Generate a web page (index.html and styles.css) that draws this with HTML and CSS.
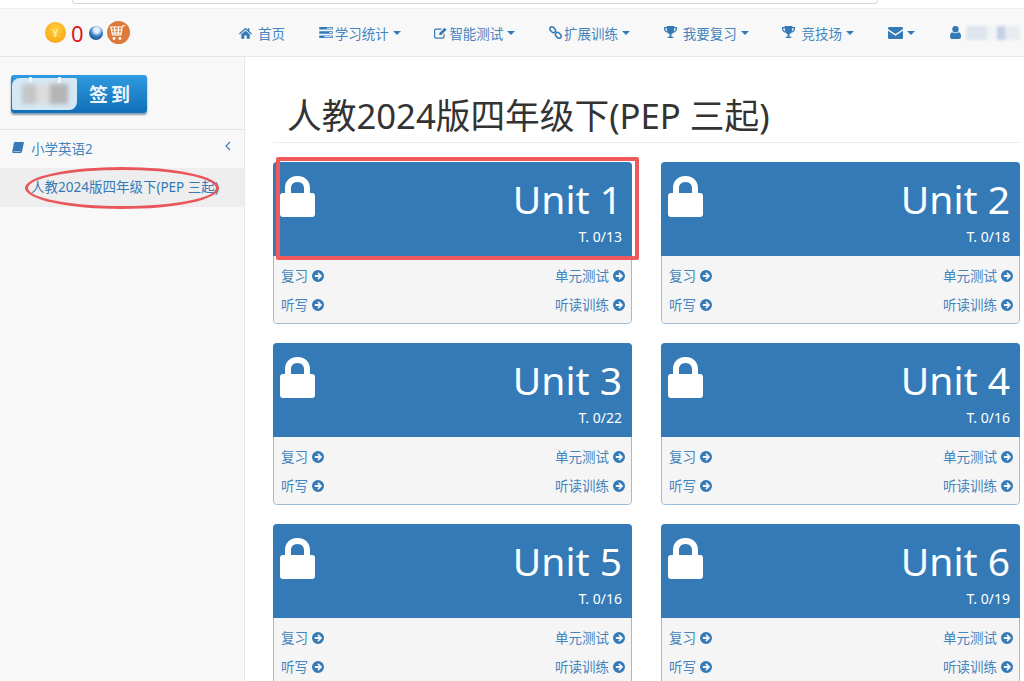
FILE: index.html
```html
<!DOCTYPE html>
<html lang="zh-CN">
<head>
    <meta charset="UTF-8">
    <title>人教2024版四年级下(PEP 三起)</title>
    <link rel="stylesheet" href="styles.css">
</head>
<body>
    <svg class="defs" width="0" height="0">
        <symbol id="i-home" viewBox="0 0 16 14"><path d="M8 0.5 10.8 3V1.2h2V4.800L16 7.700 15 8.800 8 2.700 1 8.800 0 7.700zM2.800 8.600 8 4.200l5.200 4.400V14H9.500V10h-3v4H2.800z"/></symbol>
        <symbol id="i-tasks" viewBox="0 0 16 13"><path d="M0 0h16v3H0zM0 5h16v3H0zM0 10h16v3H0z"/><path fill="#f8f8f8" d="M9 1h6v1H9zM12 6h3v1h-3zM6 11h9v1H6z"/></symbol>
        <symbol id="i-edit" viewBox="0 0 16 14"><path d="M2.500 1.500H10L8.500 3H2.500q-1 0-1 1v7.500q0 1 1 1h8q1 0 1-1V9L13 7.500v4.300q0 2.200-2.300 2.200H2.300Q0 14 0 11.800V3.800Q0 1.500 2.500 1.500z"/><path d="M13 0.500 15.500 3 9 9.500H6.500V7z"/></symbol>
        <symbol id="i-link" viewBox="0 0 14 14"><g fill="none" stroke="currentColor" stroke-width="1.700"><rect x="-3.500" y="-2.300" width="7" height="4.600" rx="2.300" transform="translate(4 4) rotate(45)"/><rect x="-3.500" y="-2.300" width="7" height="4.600" rx="2.300" transform="translate(10 10) rotate(45)"/></g></symbol>
        <symbol id="i-trophy" viewBox="0 0 14 14"><path d="M3 0h8v1h3v2q0 3.500-4 4.300Q9 8.500 8 9v2.500h2V13H4v-1.500h2V9Q5 8.500 4 7.300 0 6.500 0 3V1h3zM1.300 2.300V3q0 2 2.200 2.800Q3 4 3 2.300zM12.700 2.300H11q0 1.700-.5 3.500 2.200-.8 2.200-2.800z"/></symbol>
        <symbol id="i-envelope" viewBox="0 0 15 12"><path d="M1.200 0h12.600Q15 0 15 1.200V2L7.500 7 0 2v-.8Q0 0 1.200 0zM0 3.700 7.500 8.700 15 3.700v7.100Q15 12 13.800 12H1.200Q0 12 0 10.800z"/></symbol>
        <symbol id="i-user" viewBox="0 0 11 13"><circle cx="5.500" cy="3.200" r="3.200"/><path d="M2.200 6.300Q5.500 8.300 8.800 6.300 11 6.800 11 10.500 11 13 9 13H2Q0 13 0 10.500 0 6.800 2.200 6.300z"/></symbol>
        <symbol id="i-book" viewBox="0 0 13 13"><path d="M3.200 0H13L10.800 10.500Q10.500 12 9 12H1.800Q0 12 .3 10L2 1.500Q2.200 0 3.200 0zM1.800 10.300 1.600 10.900H9.300L9.500 10.300z"/></symbol>
        <symbol id="i-lock" viewBox="0 0 35 41"><path fill-rule="evenodd" d="M17.500 0C26 0 30 6 30 12V17H32Q35 17 35 20V38Q35 41 32 41H3Q0 41 0 38V20Q0 17 3 17H5V12C5 6 9 0 17.500 0zM17.500 6C13 6 11 9 11 12V17H24V12C24 9 22 6 17.500 6z"/></symbol>
        <symbol id="i-go" viewBox="0 0 12 12"><path fill-rule="evenodd" d="M6 0a6 6 0 1 1 0 12A6 6 0 0 1 6 0zM6.500 2.300 5.300 3.500 6.900 5H2.800v2h4.100L5.300 8.500l1.200 1.200L10.200 6z"/></symbol>
    </svg>

    <div class="browser-strip"><div class="address-bar"></div></div>

    <nav class="navbar">
        <div class="brand">
            <span class="coin">¥</span>
            <span class="coin-count">0</span>
            <span class="globe"></span>
            <span class="cart">
                <svg width="18" height="16" viewBox="0 0 18 16"><path fill="none" stroke="#fff" stroke-width="1.200" d="M1 2h12l2-2h2M2 2l1.500 8h8.500L13 2M2.500 5h11M3 8h9.500M5.500 2l.7 8M9.500 2l-.3 8"/><circle cx="5" cy="13.500" r="1.400" fill="#fff"/><circle cx="11" cy="13.500" r="1.400" fill="#fff"/></svg>
            </span>
        </div>
        <ul class="nav-links">
            <li><svg class="ico ico-home"><use href="#i-home"/></svg><span>首页</span></li>
            <li><svg class="ico ico-tasks"><use href="#i-tasks"/></svg><span>学习统计</span><i class="caret"></i></li>
            <li><svg class="ico ico-edit"><use href="#i-edit"/></svg><span>智能测试</span><i class="caret"></i></li>
            <li><svg class="ico ico-link"><use href="#i-link"/></svg><span>扩展训练</span><i class="caret"></i></li>
            <li><svg class="ico ico-trophy"><use href="#i-trophy"/></svg><span>我要复习</span><i class="caret"></i></li>
            <li><svg class="ico ico-trophy"><use href="#i-trophy"/></svg><span>竞技场</span><i class="caret"></i></li>
            <li class="nav-mail"><svg class="ico ico-mail"><use href="#i-envelope"/></svg><i class="caret"></i></li>
            <li><svg class="ico ico-user"><use href="#i-user"/></svg><span class="blur-name"></span></li>
        </ul>
    </nav>

    <div class="wrapper">
        <aside class="sidebar">
            <div class="signin-box">
                <div class="signin-btn">
                    <div class="calendar"><span class="blur-date"></span></div>
                    <span class="signin-text">签到</span>
                </div>
            </div>
            <div class="menu-title">
                <svg class="ico ico-book"><use href="#i-book"/></svg>
                <span>小学英语2</span>
                <svg class="menu-arrow" viewBox="0 0 6 10"><path d="M5 1 1 5l4 4" fill="none" stroke="currentColor" stroke-width="1.200"/></svg>
            </div>
            <div class="menu-active">人教2024版四年级下(PEP 三起)</div>
            <div class="circle-mark"></div>
        </aside>

        <main class="content">
            <h1 class="page-title">人教2024版四年级下(PEP 三起)</h1>
            <div class="cards">
                <section class="card">
                    <div class="card-head">
                        <svg class="lock"><use href="#i-lock"/></svg>
                        <div class="card-info"><div class="unit">Unit 1</div><div class="tasks">T. 0/13</div></div>
                    </div>
                    <div class="card-foot">
                        <a>复习<svg class="go"><use href="#i-go"/></svg></a>
                        <a>单元测试<svg class="go"><use href="#i-go"/></svg></a>
                        <a>听写<svg class="go"><use href="#i-go"/></svg></a>
                        <a>听读训练<svg class="go"><use href="#i-go"/></svg></a>
                    </div>
                    <div class="box-mark"></div>
                </section>
                <section class="card">
                    <div class="card-head">
                        <svg class="lock"><use href="#i-lock"/></svg>
                        <div class="card-info"><div class="unit">Unit 2</div><div class="tasks">T. 0/18</div></div>
                    </div>
                    <div class="card-foot">
                        <a>复习<svg class="go"><use href="#i-go"/></svg></a>
                        <a>单元测试<svg class="go"><use href="#i-go"/></svg></a>
                        <a>听写<svg class="go"><use href="#i-go"/></svg></a>
                        <a>听读训练<svg class="go"><use href="#i-go"/></svg></a>
                    </div>
                </section>
                <section class="card">
                    <div class="card-head">
                        <svg class="lock"><use href="#i-lock"/></svg>
                        <div class="card-info"><div class="unit">Unit 3</div><div class="tasks">T. 0/22</div></div>
                    </div>
                    <div class="card-foot">
                        <a>复习<svg class="go"><use href="#i-go"/></svg></a>
                        <a>单元测试<svg class="go"><use href="#i-go"/></svg></a>
                        <a>听写<svg class="go"><use href="#i-go"/></svg></a>
                        <a>听读训练<svg class="go"><use href="#i-go"/></svg></a>
                    </div>
                </section>
                <section class="card">
                    <div class="card-head">
                        <svg class="lock"><use href="#i-lock"/></svg>
                        <div class="card-info"><div class="unit">Unit 4</div><div class="tasks">T. 0/16</div></div>
                    </div>
                    <div class="card-foot">
                        <a>复习<svg class="go"><use href="#i-go"/></svg></a>
                        <a>单元测试<svg class="go"><use href="#i-go"/></svg></a>
                        <a>听写<svg class="go"><use href="#i-go"/></svg></a>
                        <a>听读训练<svg class="go"><use href="#i-go"/></svg></a>
                    </div>
                </section>
                <section class="card">
                    <div class="card-head">
                        <svg class="lock"><use href="#i-lock"/></svg>
                        <div class="card-info"><div class="unit">Unit 5</div><div class="tasks">T. 0/16</div></div>
                    </div>
                    <div class="card-foot">
                        <a>复习<svg class="go"><use href="#i-go"/></svg></a>
                        <a>单元测试<svg class="go"><use href="#i-go"/></svg></a>
                        <a>听写<svg class="go"><use href="#i-go"/></svg></a>
                        <a>听读训练<svg class="go"><use href="#i-go"/></svg></a>
                    </div>
                </section>
                <section class="card">
                    <div class="card-head">
                        <svg class="lock"><use href="#i-lock"/></svg>
                        <div class="card-info"><div class="unit">Unit 6</div><div class="tasks">T. 0/19</div></div>
                    </div>
                    <div class="card-foot">
                        <a>复习<svg class="go"><use href="#i-go"/></svg></a>
                        <a>单元测试<svg class="go"><use href="#i-go"/></svg></a>
                        <a>听写<svg class="go"><use href="#i-go"/></svg></a>
                        <a>听读训练<svg class="go"><use href="#i-go"/></svg></a>
                    </div>
                </section>
            </div>
        </main>
    </div>
</body>
</html>
```

FILE: styles.css
```css
html, body {
    margin: 0;
    padding: 0;
    height: 681px;
    overflow: hidden;
    background-color: #fff;
    color: #4585bd;
    font-family: "Noto Sans", "Noto Sans CJK SC", sans-serif;
    font-size: 13.5px;
}

.defs {
    position: absolute;
}

.ico {
    fill: #337ab7;
    color: #337ab7;
    flex: none;
}

/* top edge of the browser */
.browser-strip {
    height: 8px;
    background-color: #fff;
    overflow: hidden;
    padding-left: 72px;
}

.address-bar {
    width: 806px;
    height: 4px;
    box-sizing: border-box;
    border: 1px solid #d5d5d5;
    border-top: 0;
    border-radius: 0 0 10px 10px;
}

/* navbar */
.navbar {
    display: flex;
    align-items: center;
    height: 47px;
    background-color: #f8f8f8;
    border-top: 1px solid #f0f0f0;
    border-bottom: 1px solid #e7e7e7;
}

.brand {
    display: flex;
    align-items: center;
    width: 239px;
    box-sizing: border-box;
    padding-left: 45px;
}

.coin {
    width: 21px;
    height: 21px;
    border-radius: 50%;
    background: radial-gradient(circle at 50% 35%, #ffd23c, #f79a0c);
    color: #fff3c0;
    font-size: 11px;
    line-height: 21px;
    text-align: center;
}

.coin-count {
    margin-left: 5px;
    color: #d9161c;
    font-size: 22px;
    line-height: 24px;
}

.globe {
    width: 14px;
    height: 14px;
    margin-left: 5px;
    border-radius: 50%;
    background: radial-gradient(circle at 55% 30%, #e4f0fa 0 20%, #2f7cc4 50%, #123a66);
}

.cart {
    display: flex;
    align-items: center;
    justify-content: center;
    width: 23px;
    height: 23px;
    margin-left: 4px;
    border-radius: 50%;
    background-color: #dd7a3a;
}

.nav-links {
    display: flex;
    align-items: center;
    gap: 33.700px;
    margin: 0;
    padding: 0;
    list-style: none;
    white-space: nowrap;
}

.nav-links li {
    display: flex;
    align-items: center;
}

.nav-links .nav-mail {
    margin-right: 2px;
}

.ico-home { width: 13px; height: 12px; margin-right: 6px; }
.ico-tasks { width: 14px; height: 11px; margin-right: 2px; }
.ico-edit { width: 13px; height: 12px; margin-right: 2px; }
.ico-link { width: 13px; height: 13px; margin-right: 2px; }
.ico-trophy { width: 13px; height: 13px; margin-right: 6px; }
.ico-mail { width: 15px; height: 12px; }
.ico-user { width: 11px; height: 13px; margin-right: 5px; }
.ico-book { width: 12px; height: 12px; margin-right: 7px; }

.caret {
    width: 0;
    height: 0;
    margin-left: 4px;
    border-top: 4px solid #337ab7;
    border-left: 4px solid transparent;
    border-right: 4px solid transparent;
}

.blur-name {
    width: 54px;
    height: 14px;
    background: linear-gradient(90deg, #dfe5ee 0 38%, #f1f3f6 38% 58%, #c5d0e4 58% 72%, #e8ebf1 72% 100%);
    filter: blur(1.500px);
}

/* sidebar */
.wrapper {
    display: flex;
    height: 625px;
}

.sidebar {
    position: relative;
    width: 244px;
    flex: none;
    background-color: #f8f8f8;
    border-right: 1px solid #e7e7e7;
}

.signin-box {
    height: 54px;
    padding: 18px 0 0 11px;
    border-bottom: 1px solid #e7e7e7;
}

.signin-btn {
    display: flex;
    align-items: center;
    width: 136px;
    height: 38px;
    border-radius: 3px;
    background: linear-gradient(#2f9be0, #0f6fb8);
    box-shadow: 0 2px 2px #8a9aa8;
}

.calendar {
    position: relative;
    display: flex;
    align-items: center;
    justify-content: center;
    width: 65px;
    height: 32px;
    margin-left: 1px;
    border-radius: 8px 2px 8px 2px;
    background-color: #d5e8f4;
}

.calendar::before,
.calendar::after {
    content: "";
    position: absolute;
    top: -1px;
    width: 3px;
    height: 6px;
    background-color: #eef6fb;
}

.calendar::before { left: 17px; }
.calendar::after { left: 46px; }

.blur-date {
    width: 46px;
    height: 20px;
    background: linear-gradient(90deg, #c4c6c8 0 30%, #dcdcdc 30% 60%, #b4b4b4 60% 100%);
    filter: blur(2px);
}

.signin-text {
    margin-left: 12px;
    color: #eef6fb;
    font-size: 19px;
    font-weight: 700;
    letter-spacing: 3px;
}

.menu-title {
    display: flex;
    align-items: center;
    box-sizing: border-box;
    height: 38px;
    padding: 0 0 2px 12px;
}

.menu-arrow {
    width: 6px;
    height: 10px;
    margin-left: auto;
    margin-right: 13px;
    margin-top: -4px;
}

.menu-active {
    height: 39px;
    padding-left: 31px;
    line-height: 38px;
    background-color: #eee;
    color: #337ab7;
    white-space: nowrap;
}

.circle-mark {
    position: absolute;
    left: 25px;
    top: 110px;
    width: 188px;
    height: 36px;
    border: 3px solid #e8555a;
    border-radius: 50%;
}

/* main area */
.content {
    flex: 1;
    padding: 0 4px 0 28px;
}

.page-title {
    margin: 37px 0 19px;
    padding: 0 0 4px 14px;
    border-bottom: 1px solid #eee;
    color: #333;
    font-size: 34.700px;
    font-weight: 400;
    line-height: 44px;
    white-space: nowrap;
}

.cards {
    display: grid;
    grid-template-columns: 359px 359px;
    column-gap: 29px;
    row-gap: 19px;
}

.card {
    position: relative;
    height: 162px;
    box-sizing: border-box;
    border: 1px solid #9dbcd9;
    border-radius: 4px;
}

.card-head {
    display: flex;
    justify-content: space-between;
    box-sizing: border-box;
    height: 94px;
    margin: -1px -1px 0;
    padding: 14px 10px 0 7px;
    border-radius: 4px 4px 0 0;
    background-color: #337ab7;
    color: #fff;
}

.lock {
    width: 35px;
    height: 41px;
    fill: #fff;
}

.card-info {
    margin-top: -1px;
    text-align: right;
}

.unit {
    font-size: 39px;
    line-height: 48px;
}

.tasks {
    margin-top: 5px;
    font-size: 14px;
    line-height: 18px;
}

.card-foot {
    display: grid;
    grid-template-columns: 1fr auto;
    align-content: center;
    row-gap: 9px;
    box-sizing: border-box;
    height: 67px;
    padding: 2px 6px 0 7px;
    border-radius: 0 0 4px 4px;
    background-color: #f5f5f5;
    line-height: 20px;
}

.card-foot a {
    display: flex;
    align-items: center;
    gap: 4px;
}

.go {
    width: 12px;
    height: 12px;
    fill: #337ab7;
}

.box-mark {
    position: absolute;
    left: 2px;
    top: -6px;
    width: 355px;
    height: 95px;
    border: 4px solid #f05a5c;
    border-radius: 2px;
}
```
